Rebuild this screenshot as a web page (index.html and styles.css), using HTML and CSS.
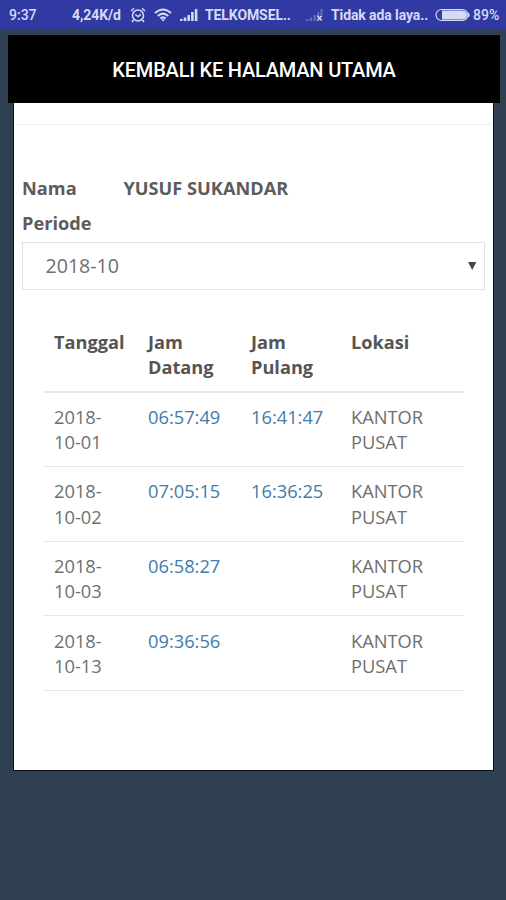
FILE: index.html
```html
<!DOCTYPE html>
<html lang="id">

	<head>

		<meta charset="utf-8">

		<title>Absensi</title>

		<link rel="stylesheet" href="styles.css">

	</head>

	<body>

		<div class="statusbar">

			<span class="clock">9:37</span>
			<span class="speed">4,24K/d</span>

			<svg class="alarm" width="16" height="16" viewBox="0 0 16 16" fill="none" stroke="currentColor" stroke-width="1.5">
				<circle cx="8" cy="8.5" r="5.5"/>
				<path d="M1 4 L4 1.3 M15 4 L12 1.3 M3.5 13 L2 15 M12.5 13 L14 15 M5.3 7.5 L8 9.5 L11 7.3"/>
			</svg>

			<svg class="wifi" width="18" height="14" viewBox="0 0 18 14" fill="none" stroke="currentColor" stroke-width="2">
				<path d="M1 5 Q9 -2 17 5 M3.8 8 Q9 3.2 14.2 8 M6.4 10.6 Q9 8.2 11.6 10.6"/>
				<path d="M7 11.2 H11 L9 13.6 Z" fill="currentColor" stroke="none"/>
			</svg>

			<svg class="signal" width="18" height="12" viewBox="0 0 18 12" fill="currentColor">
				<path d="M0 10h2.6v2H0z M3.7 8.5h2.6v3.5H3.7z M7.4 6h2.6v6H7.4z M11.1 3h2.6v9h-2.6z M14.8 0h2.6v12h-2.6z"/>
			</svg>

			<span class="carrier">TELKOMSEL..</span>

			<svg class="nosignal" width="18" height="12" viewBox="0 0 18 12" fill="currentColor">
				<path opacity=".3" d="M0 10h2.4v2H0z M3.7 8.5h2.4v3.5H3.7z M7.4 6h2.4v6H7.4z M11.1 3h2.2v4h-2.2z M14.4 0h2.2v6h-2.2z"/>
				<path d="M11.3 6.7 L15.7 11.5 M15.7 6.7 L11.3 11.5" stroke="currentColor" stroke-width="1.6"/>
			</svg>

			<span class="carrier2">Tidak ada laya..</span>

			<svg class="battery" width="35" height="14" viewBox="0 0 35 14">
				<rect x="1" y="1.5" width="32" height="11" rx="5.5" fill="none" stroke="currentColor" stroke-width="1.2"/>
				<path d="M7 2.5 H28 Q32 3 32 7 T28 11.5 H7 Z" fill="currentColor"/>
				<path d="M33 4.8 Q34.8 5 34.8 7 T33 9.2 Z" fill="currentColor"/>
			</svg>

			<span class="percent">89%</span>

		</div>

		<button class="back">KEMBALI KE HALAMAN UTAMA</button>

		<div class="card">

			<hr class="divider">

			<div class="info">
				<span>Nama</span>
				<span>YUSUF SUKANDAR</span>
				<span>Periode</span>
			</div>

			<div class="select">
				<span>2018-10</span>
				<svg width="9" height="8" viewBox="0 0 9 8"><path d="M0 0 H8.4 L4.2 8 Z" fill="#484848"/></svg>
			</div>

			<table class="absen">
				<colgroup>
					<col class="col-tanggal">
					<col class="col-datang">
					<col class="col-pulang">
					<col class="col-lokasi">
				</colgroup>
				<thead>
					<tr><th>Tanggal</th><th>Jam<br>Datang</th><th>Jam<br>Pulang</th><th>Lokasi</th></tr>
				</thead>
				<tbody>
					<tr><td>2018-<br>10-01</td><td class="jam">06:57:49</td><td class="jam">16:41:47</td><td>KANTOR<br>PUSAT</td></tr>
					<tr><td>2018-<br>10-02</td><td class="jam">07:05:15</td><td class="jam">16:36:25</td><td>KANTOR<br>PUSAT</td></tr>
					<tr><td>2018-<br>10-03</td><td class="jam">06:58:27</td><td></td><td>KANTOR<br>PUSAT</td></tr>
					<tr><td>2018-<br>10-13</td><td class="jam">09:36:56</td><td></td><td>KANTOR<br>PUSAT</td></tr>
				</tbody>
			</table>

		</div>

	</body>

</html>
```
FILE: styles.css
```css
* {
	box-sizing: border-box;
}

body {

	margin: 0;

	height: 900px;
	overflow: hidden;

	background: #2f4052;

	font-family: "Open Sans", "Noto Sans", sans-serif;
	font-size: 18px;
	color: #6f6f6f;

}

.statusbar {

	display: flex;
	align-items: center;

	height: 29px;
	padding-left: 9px;

	background: #313aa3;
	color: #d5d9f6;

	font-family: Roboto, sans-serif;
	font-size: 14px;
	font-weight: 500;
	white-space: nowrap;

}

.statusbar svg {
	flex: none;
}

.statusbar span {
	flex: none;
}

.clock {
	width: 63px;
}

.speed {
	width: 58px;
	font-weight: 700;
	letter-spacing: -0.1px;
}

.alarm {
	margin-right: 8px;
}

.wifi {
	margin-right: 8px;
}

.signal {
	margin-right: 7px;
}

.carrier {
	width: 101px;
}

.nosignal {
	margin-right: 7px;
}

.carrier2 {
	width: 104px;
}

.battery {
	margin-right: 3px;
}

.carrier,
.carrier2 {
	font-weight: 700;
	letter-spacing: -0.1px;
}

.back {

	display: block;

	width: 492px;
	height: 68px;
	margin: 6px 0 0 8px;
	padding: 2px 0 0;

	border: 0;
	background: #000000;
	color: #ffffff;

	font-family: Roboto, sans-serif;
	font-size: 20px;
	font-weight: 500;
	letter-spacing: -0.2px;

}

.card {

	width: 481px;
	height: 668px;
	margin-left: 13px;
	padding: 21px 1px 0;

	border: 1px solid #0a131c;
	border-top: 0;
	background: #ffffff;

}

.divider {

	height: 1px;
	margin: 0 1px 0 3px;

	border: 0;
	background: #eeeeee;

}

.info {

	display: grid;
	grid-template-columns: 101.5px auto;
	grid-auto-rows: 35px;
	align-items: center;

	margin: 45px 0 0 7px;

	font-size: 18.2px;
	font-weight: 700;
	color: #5c5c5c;

}

.select {

	display: flex;
	align-items: center;
	justify-content: space-between;

	width: 463px;
	height: 48px;
	margin: 2px 0 0 7px;
	padding: 0 7px 1px 22.5px;

	border: 1px solid #e2e2e2;

	font-size: 19.6px;

}

.absen {

	width: 421px;
	margin: 27px 0 0 28px;

	border-collapse: collapse;
	table-layout: fixed;

	font-size: 18.3px;
	line-height: 25.3px;

}

.col-tanggal {
	width: 94px;
}

.col-datang {
	width: 103px;
}

.col-pulang {
	width: 100px;
}

.absen th,
.absen td {

	padding: 11.3px 0 11.7px 11px;

	border-bottom: 1px solid #e6e6e6;

	text-align: left;
	vertical-align: top;

}

.absen th {

	padding-top: 12.6px;
	padding-bottom: 10.4px;

	border-bottom: 2px solid #e9e9e9;

	font-size: 18.2px;
	font-weight: 700;
	color: #555555;

}

.absen .jam {
	color: #417ca8;
}
```
